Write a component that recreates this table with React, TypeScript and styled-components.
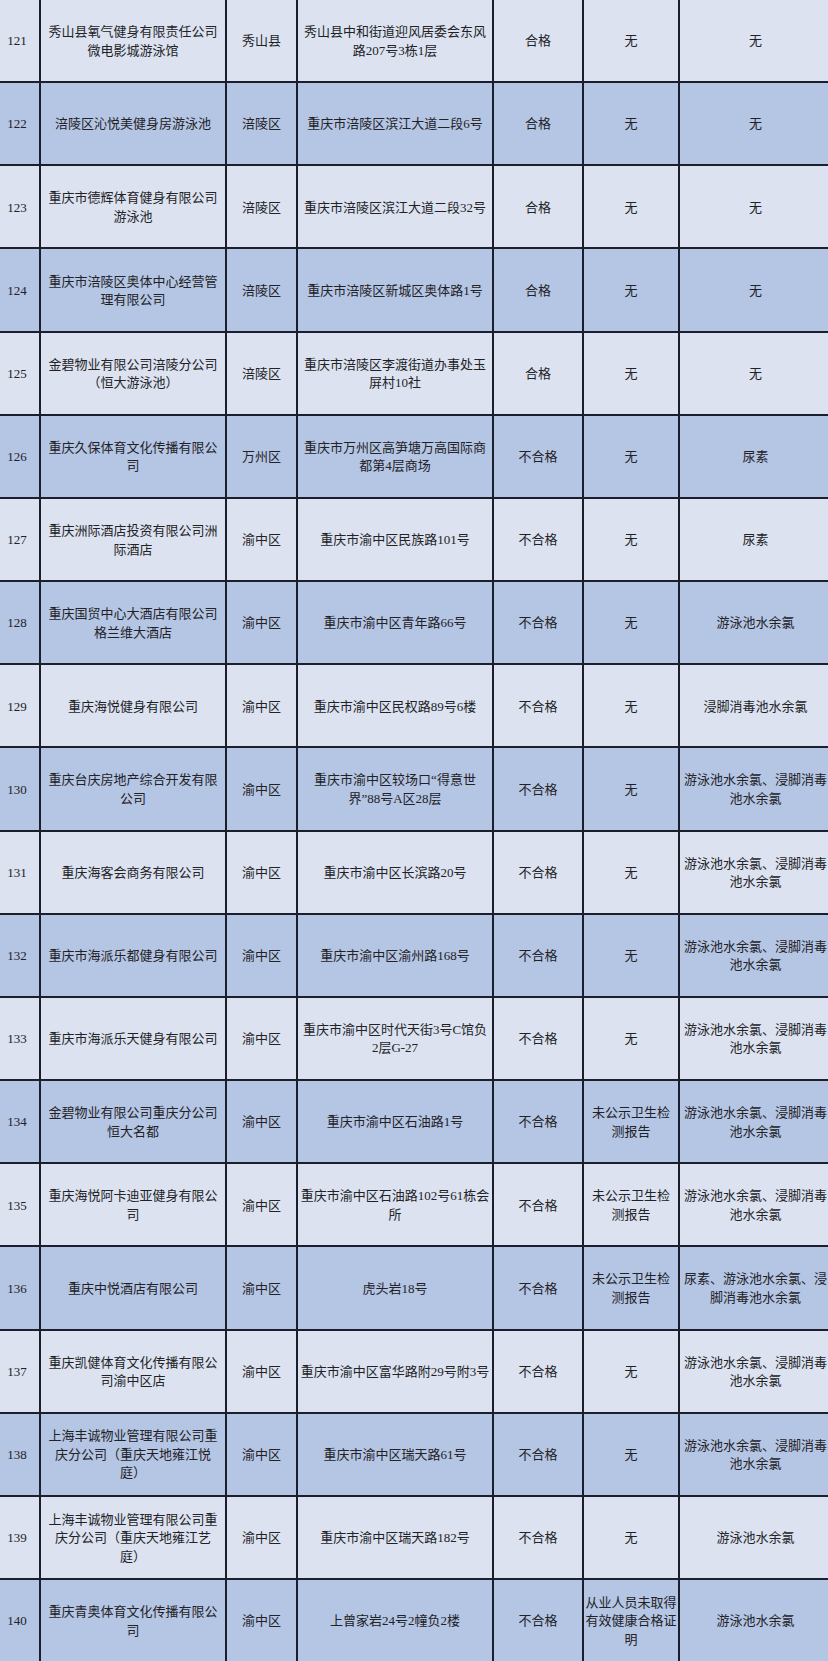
import styled, { createGlobalStyle } from 'styled-components';

interface Row {
  no: number;
  unit: string;
  district: string;
  address: string;
  result: string;
  notice: string;
  items: string;
}

const BOTH = '游泳池水余氯、浸脚消毒\n池水余氯';
const NO_REPORT = '未公示卫生检\n测报告';

const rows: Row[] = [
  { no: 121, unit: '秀山县氧气健身有限责任公司\n微电影城游泳馆', district: '秀山县', address: '秀山县中和街道迎风居委会东风\n路207号3栋1层', result: '合格', notice: '无', items: '无' },
  { no: 122, unit: '涪陵区沁悦美健身房游泳池', district: '涪陵区', address: '重庆市涪陵区滨江大道二段6号', result: '合格', notice: '无', items: '无' },
  { no: 123, unit: '重庆市德辉体育健身有限公司\n游泳池', district: '涪陵区', address: '重庆市涪陵区滨江大道二段32号', result: '合格', notice: '无', items: '无' },
  { no: 124, unit: '重庆市涪陵区奥体中心经营管\n理有限公司', district: '涪陵区', address: '重庆市涪陵区新城区奥体路1号', result: '合格', notice: '无', items: '无' },
  { no: 125, unit: '金碧物业有限公司涪陵分公司\n（恒大游泳池）', district: '涪陵区', address: '重庆市涪陵区李渡街道办事处玉\n屏村10社', result: '合格', notice: '无', items: '无' },
  { no: 126, unit: '重庆久保体育文化传播有限公\n司', district: '万州区', address: '重庆市万州区高笋塘万高国际商\n都第4层商场', result: '不合格', notice: '无', items: '尿素' },
  { no: 127, unit: '重庆洲际酒店投资有限公司洲\n际酒店', district: '渝中区', address: '重庆市渝中区民族路101号', result: '不合格', notice: '无', items: '尿素' },
  { no: 128, unit: '重庆国贸中心大酒店有限公司\n格兰维大酒店', district: '渝中区', address: '重庆市渝中区青年路66号', result: '不合格', notice: '无', items: '游泳池水余氯' },
  { no: 129, unit: '重庆海悦健身有限公司', district: '渝中区', address: '重庆市渝中区民权路89号6楼', result: '不合格', notice: '无', items: '浸脚消毒池水余氯' },
  { no: 130, unit: '重庆台庆房地产综合开发有限\n公司', district: '渝中区', address: '重庆市渝中区较场口“得意世\n界”88号A区28层', result: '不合格', notice: '无', items: BOTH },
  { no: 131, unit: '重庆海客会商务有限公司', district: '渝中区', address: '重庆市渝中区长滨路20号', result: '不合格', notice: '无', items: BOTH },
  { no: 132, unit: '重庆市海派乐都健身有限公司', district: '渝中区', address: '重庆市渝中区渝州路168号', result: '不合格', notice: '无', items: BOTH },
  { no: 133, unit: '重庆市海派乐天健身有限公司', district: '渝中区', address: '重庆市渝中区时代天街3号C馆负\n2层G-27', result: '不合格', notice: '无', items: BOTH },
  { no: 134, unit: '金碧物业有限公司重庆分公司\n恒大名都', district: '渝中区', address: '重庆市渝中区石油路1号', result: '不合格', notice: NO_REPORT, items: BOTH },
  { no: 135, unit: '重庆海悦阿卡迪亚健身有限公\n司', district: '渝中区', address: '重庆市渝中区石油路102号61栋会\n所', result: '不合格', notice: NO_REPORT, items: BOTH },
  { no: 136, unit: '重庆中悦酒店有限公司', district: '渝中区', address: '虎头岩18号', result: '不合格', notice: NO_REPORT, items: '尿素、游泳池水余氯、浸\n脚消毒池水余氯' },
  { no: 137, unit: '重庆凯健体育文化传播有限公\n司渝中区店', district: '渝中区', address: '重庆市渝中区富华路附29号附3号', result: '不合格', notice: '无', items: BOTH },
  { no: 138, unit: '上海丰诚物业管理有限公司重\n庆分公司（重庆天地雍江悦\n庭）', district: '渝中区', address: '重庆市渝中区瑞天路61号', result: '不合格', notice: '无', items: BOTH },
  { no: 139, unit: '上海丰诚物业管理有限公司重\n庆分公司（重庆天地雍江艺\n庭）', district: '渝中区', address: '重庆市渝中区瑞天路182号', result: '不合格', notice: '无', items: '游泳池水余氯' },
  { no: 140, unit: '重庆青奥体育文化传播有限公\n司', district: '渝中区', address: '上曾家岩24号2幢负2楼', result: '不合格', notice: '从业人员未取得\n有效健康合格证\n明', items: '游泳池水余氯' },
];

const App = () => (
  <>
    <GlobalStyle />
    <Sheet>
      {rows.map((r, i) => {
        const tone = i % 2 === 0 ? 'light' : 'dark';
        return [r.no, r.unit, r.district, r.address, r.result, r.notice, r.items].map((v, j) => (
          <Cell key={`${r.no}-${j}`} $tone={tone}>
            {v}
          </Cell>
        ));
      })}
    </Sheet>
  </>
);

export default App;

const GlobalStyle = createGlobalStyle`
  html, body {
    margin: 0;
    padding: 0;
    overflow: hidden;
    background: #1b1f2c;
  }
`;

const Sheet = styled.div`
  display: grid;
  grid-template-columns: 44px 184px 69px 194px 88px 94px 151px;
  grid-auto-rows: 81.17px;
  gap: 2px;
  width: max-content;
  margin-left: -5px;
  background: #1b1f2c;
  font-family: 'Liberation Serif', 'Noto Sans CJK SC', serif;
  font-size: 13px;
  line-height: 18.5px;
  color: #222226;
`;

const Cell = styled.div<{ $tone: 'light' | 'dark' }>`
  display: flex;
  align-items: center;
  justify-content: center;
  padding-top: 2px;
  text-align: center;
  white-space: pre;
  background: ${p => (p.$tone === 'light' ? '#dce2f0' : '#b5c5e4')};
`;
